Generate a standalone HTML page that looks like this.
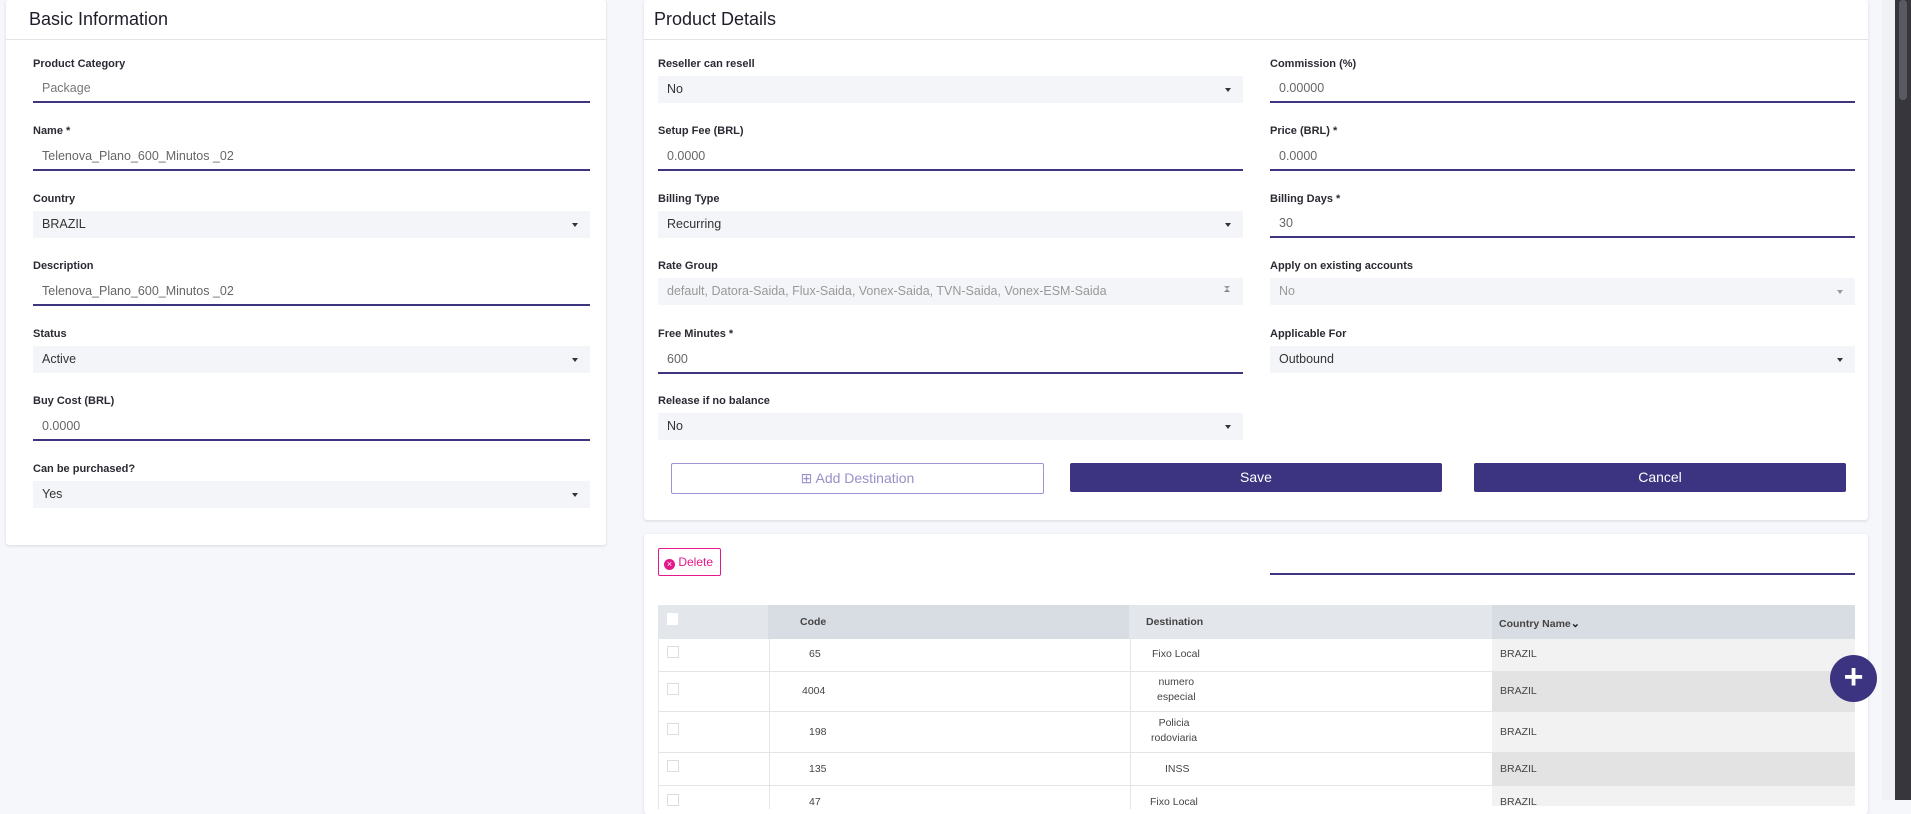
<!DOCTYPE html>
<html><head><meta charset="utf-8"><style>
*{box-sizing:border-box;margin:0;padding:0}
body{width:1911px;height:800px;overflow:hidden;background:#f6f7fb;font-family:"Liberation Sans",sans-serif;position:relative;color:#222}
.card{position:absolute;background:#fff;box-shadow:0 1px 3px rgba(0,0,0,.12);border-radius:3px}
.title{position:absolute;font-size:18px;color:#1e1e2a}
.hr{position:absolute;height:1px;background:#e3e4e8}
.lab{position:absolute;font-size:11px;font-weight:bold;color:#2a2a33}
.inp{position:absolute;height:28px;border-bottom:2px solid #3d3580;font-size:12.5px;color:#666;padding:6px 0 0 9px}
.sel{position:absolute;height:27px;background:#f4f5f8;font-size:12.5px;color:#333;padding:6px 0 0 9px}
.sel:after{content:"";position:absolute;right:12px;top:12px;border:3.5px solid transparent;border-top:4px solid #333}
.sel.up:after{border:3px solid transparent;border-bottom:3.5px solid #888;top:8px;right:13px}
.sel.dis{color:#999}
.sel.dis:after{border-top-color:#999}
.btn{position:absolute;height:29px;font-size:14px;text-align:center;line-height:29px;border-radius:2px}
.cell{position:absolute;font-size:10.5px;color:#444}
</style></head><body>

<div class="card" style="left:6px;top:0;width:600px;height:545px"></div>
<div class="title" style="left:29px;top:9px">Basic Information</div>
<div class="hr" style="left:6px;top:39px;width:600px"></div>

<div class="lab" style="left:33px;top:58px">Product Category</div>
<div class="inp" style="left:33px;top:75px;width:557px;color:#777">Package</div>
<div class="lab" style="left:33px;top:125px">Name *</div>
<div class="inp" style="left:33px;top:143px;width:557px">Telenova_Plano_600_Minutos _02</div>
<div class="lab" style="left:33px;top:193px">Country</div>
<div class="sel" style="left:33px;top:211px;width:557px">BRAZIL</div>
<div class="lab" style="left:33px;top:260px">Description</div>
<div class="inp" style="left:33px;top:278px;width:557px">Telenova_Plano_600_Minutos _02</div>
<div class="lab" style="left:33px;top:328px">Status</div>
<div class="sel" style="left:33px;top:346px;width:557px">Active</div>
<div class="lab" style="left:33px;top:395px">Buy Cost (BRL)</div>
<div class="inp" style="left:33px;top:413px;width:557px">0.0000</div>
<div class="lab" style="left:33px;top:463px">Can be purchased?</div>
<div class="sel" style="left:33px;top:481px;width:557px">Yes</div>

<div class="card" style="left:644px;top:0;width:1224px;height:520px"></div>
<div class="title" style="left:654px;top:9px">Product Details</div>
<div class="hr" style="left:644px;top:39px;width:1224px"></div>

<div class="lab" style="left:658px;top:58px">Reseller can resell</div>
<div class="sel" style="left:658px;top:76px;width:585px">No</div>
<div class="lab" style="left:658px;top:125px">Setup Fee (BRL)</div>
<div class="inp" style="left:658px;top:143px;width:585px">0.0000</div>
<div class="lab" style="left:658px;top:193px">Billing Type</div>
<div class="sel" style="left:658px;top:211px;width:585px">Recurring</div>
<div class="lab" style="left:658px;top:260px">Rate Group</div>
<div class="sel dis up" style="left:658px;top:278px;width:585px">default, Datora-Saida, Flux-Saida, Vonex-Saida, TVN-Saida, Vonex-ESM-Saida</div>
<div class="lab" style="left:658px;top:328px">Free Minutes *</div>
<div class="inp" style="left:658px;top:346px;width:585px">600</div>
<div class="lab" style="left:658px;top:395px">Release if no balance</div>
<div class="sel" style="left:658px;top:413px;width:585px">No</div>

<div class="lab" style="left:1270px;top:58px">Commission (%)</div>
<div class="inp" style="left:1270px;top:75px;width:585px">0.00000</div>
<div class="lab" style="left:1270px;top:125px">Price (BRL) *</div>
<div class="inp" style="left:1270px;top:143px;width:585px">0.0000</div>
<div class="lab" style="left:1270px;top:193px">Billing Days *</div>
<div class="inp" style="left:1270px;top:210px;width:585px">30</div>
<div class="lab" style="left:1270px;top:260px">Apply on existing accounts</div>
<div class="sel dis" style="left:1270px;top:278px;width:585px">No</div>
<div class="lab" style="left:1270px;top:328px">Applicable For</div>
<div class="sel" style="left:1270px;top:346px;width:585px">Outbound</div>

<div class="btn" style="left:671px;top:463px;width:373px;height:31px;border:1px solid #9d94d4;color:#9790c8;line-height:29px">⊞ Add Destination</div>
<div class="btn" style="left:1070px;top:463px;width:372px;background:#3c3480;color:#fff">Save</div>
<div class="btn" style="left:1474px;top:463px;width:372px;background:#3c3480;color:#fff">Cancel</div>

<div class="card" style="left:644px;top:534px;width:1224px;height:280px"></div>
<div style="position:absolute;left:658px;top:548px;width:63px;height:28px;border:1px solid #e4188a;border-radius:2px;color:#e4188a;font-size:12px;line-height:26px;padding-left:5px"><span style="display:inline-block;width:11px;height:11px;border-radius:50%;background:#e4188a;color:#fff;font-size:9px;line-height:11px;text-align:center;vertical-align:-1px">×</span> Delete</div>
<div style="position:absolute;left:1270px;top:573px;width:585px;height:2px;background:#3d3580"></div>

<div style="position:absolute;left:658px;top:605px;width:110px;height:34px;background:#e3e6eb"></div>
<div style="position:absolute;left:768px;top:605px;width:361px;height:34px;background:#d8dce3"></div>
<div style="position:absolute;left:1129px;top:605px;width:363px;height:34px;background:#e3e6eb"></div>
<div style="position:absolute;left:1492px;top:605px;width:363px;height:34px;background:#d8dce3"></div>
<div style="position:absolute;left:667px;top:613px;width:11px;height:12px;background:#fff"></div>
<div class="cell" style="left:800px;top:616px;font-weight:bold;color:#444">Code</div>
<div class="cell" style="left:1146px;top:616px;font-weight:bold;color:#444">Destination</div>
<div class="cell" style="left:1499px;top:617px;font-weight:bold;color:#444">Country Name<span style="font-size:11px;color:#222">⌄</span></div>

<div style="position:absolute;left:658px;top:639px;width:1197px;height:170px;background:#fff"></div>
<div style="position:absolute;left:1492px;top:639px;width:363px;height:32px;background:#f2f2f2"></div>
<div style="position:absolute;left:1492px;top:672px;width:363px;height:39px;background:#e3e3e3"></div>
<div style="position:absolute;left:1492px;top:712px;width:363px;height:40px;background:#f2f2f2"></div>
<div style="position:absolute;left:1492px;top:753px;width:363px;height:32px;background:#e3e3e3"></div>
<div style="position:absolute;left:1492px;top:786px;width:363px;height:20px;background:#f2f2f2"></div>
<div style="position:absolute;left:658px;top:671px;width:1197px;height:1px;background:#e4e4e4"></div>
<div style="position:absolute;left:658px;top:711px;width:1197px;height:1px;background:#e4e4e4"></div>
<div style="position:absolute;left:658px;top:752px;width:1197px;height:1px;background:#e4e4e4"></div>
<div style="position:absolute;left:658px;top:785px;width:1197px;height:1px;background:#e4e4e4"></div>
<div style="position:absolute;left:658px;top:639px;width:1px;height:170px;background:#e4e4e4"></div>
<div style="position:absolute;left:769px;top:639px;width:1px;height:170px;background:#e4e4e4"></div>
<div style="position:absolute;left:1130px;top:639px;width:1px;height:170px;background:#e4e4e4"></div>

<div style="position:absolute;left:667px;top:646px;width:12px;height:12px;border:1px solid #ddd"></div>
<div style="position:absolute;left:667px;top:683px;width:12px;height:12px;border:1px solid #ddd"></div>
<div style="position:absolute;left:667px;top:723px;width:12px;height:12px;border:1px solid #ddd"></div>
<div style="position:absolute;left:667px;top:760px;width:12px;height:12px;border:1px solid #ddd"></div>
<div style="position:absolute;left:667px;top:794px;width:12px;height:12px;border:1px solid #ddd"></div>

<div class="cell" style="left:809px;top:648px">65</div>
<div class="cell" style="left:1152px;top:648px">Fixo Local</div>
<div class="cell" style="left:1500px;top:648px">BRAZIL</div>
<div class="cell" style="left:802px;top:685px">4004</div>
<div class="cell" style="left:1157px;top:675px;text-align:center;line-height:15px">numero<br>especial</div>
<div class="cell" style="left:1500px;top:685px">BRAZIL</div>
<div class="cell" style="left:809px;top:726px">198</div>
<div class="cell" style="left:1151px;top:716px;text-align:center;line-height:15px">Policia<br>rodoviaria</div>
<div class="cell" style="left:1500px;top:726px">BRAZIL</div>
<div class="cell" style="left:809px;top:763px">135</div>
<div class="cell" style="left:1165px;top:763px">INSS</div>
<div class="cell" style="left:1500px;top:763px">BRAZIL</div>
<div class="cell" style="left:809px;top:796px">47</div>
<div class="cell" style="left:1150px;top:796px">Fixo Local</div>
<div class="cell" style="left:1500px;top:796px">BRAZIL</div>

<div style="position:absolute;left:1830px;top:655px;width:47px;height:47px;border-radius:50%;background:#3c3480;color:#fff;font-size:34px;font-weight:bold;text-align:center;line-height:45px">+</div>

<div style="position:absolute;left:1882px;top:0;width:13px;height:800px;background:#f0f1f5"></div>
<div style="position:absolute;left:1895px;top:0;width:16px;height:800px;background:#36363c"></div>
<div style="position:absolute;left:1899px;top:0;width:8px;height:100px;border-radius:4px;background:#5a5a62"></div>
</body></html>
